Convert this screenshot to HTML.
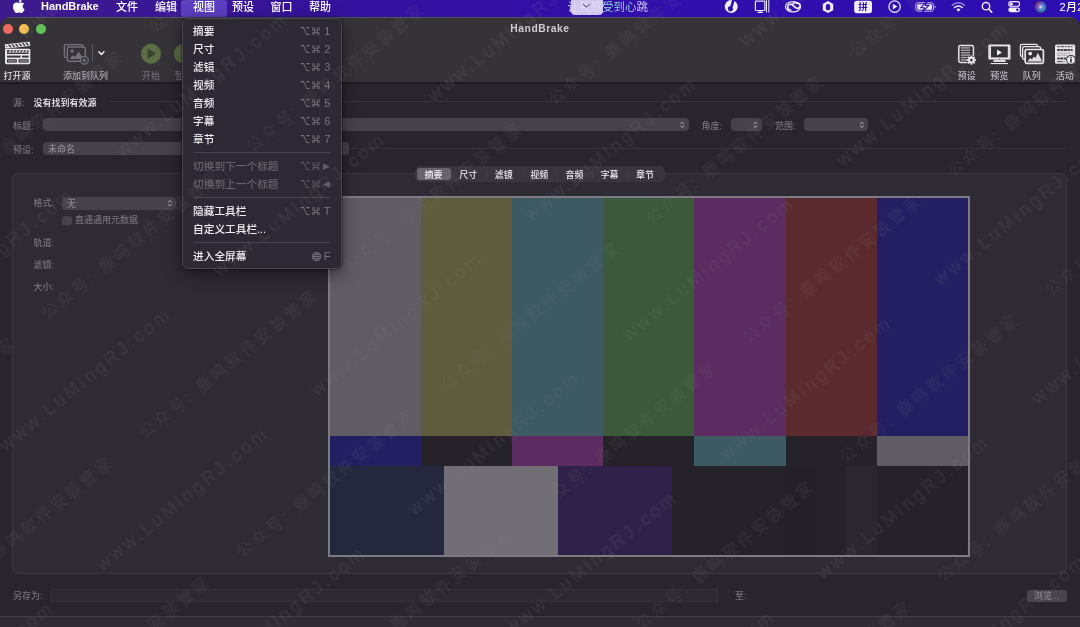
<!DOCTYPE html>
<html lang="zh-CN">
<head>
<meta charset="utf-8">
<title>HandBrake</title>
<style>
*{box-sizing:border-box;margin:0;padding:0}
html,body{width:1080px;height:627px;overflow:hidden;background:#28252e}
body{position:relative;font-weight:500;font-family:"Liberation Sans","Noto Sans CJK SC",sans-serif;color:#fff;font-size:9px;line-height:1}
.abs{position:absolute}
svg{position:absolute;overflow:visible}
#menubar{position:absolute;left:0;top:0;width:1080px;height:17px;will-change:transform}
#menubar .mi{position:absolute;top:-0.5px;height:14px;line-height:14px;font-size:11px;color:#fff;white-space:nowrap}
#menubar .mi.b{font-weight:bold;top:-1px;letter-spacing:-.05px}
#menubar .hl{position:absolute;left:181px;top:0;width:46px;height:17px;background:#5b3ec2;border-radius:3px}
#mbbg{position:absolute;left:0;top:0;width:1080px;height:30px;background:linear-gradient(90deg,#3e1b8c 0%,#3a1795 15%,#34119f 35%,#300fab 60%,#2c0eb1 100%)}
#win{position:absolute;left:0;top:17px;width:1080px;height:610px;background:#28252e;border-radius:10px 10px 0 0;overflow:hidden}
#wi{position:absolute;left:0;top:-17px;width:1080px;height:627px;will-change:transform}
#toolbar{position:absolute;left:0;top:17px;width:1080px;height:65px;background:#353338;border-top:1px solid #55535a}
.tl{position:absolute;top:24px;width:10px;height:10px;border-radius:50%}
.tbl{position:absolute;top:71px;height:11px;line-height:11px;font-size:9px;color:#bdbbc2;white-space:nowrap;transform:translateX(-50%)}
.tbl.w{color:#dddbe0}
.tbl.dim{color:#6f6d74}
#title{position:absolute;left:0;width:1080px;top:22px;height:13px;line-height:13px;text-align:center;font-size:10.3px;font-weight:bold;color:#cfcdd2;letter-spacing:.55px}
.lbl{position:absolute;height:12px;line-height:12px;font-size:9px;color:#75727b;white-space:nowrap}
.pop{position:absolute;height:13px;background:#46424c;border-radius:4px}
.pop .tx{position:absolute;left:5px;top:1px;height:13px;line-height:13px;font-size:9px;color:#8d8a93}
.line{position:absolute;height:1px;background:#36333b}
#tabbox{position:absolute;left:12px;top:173px;width:1055px;height:401px;background:#2f2b35;border:1px solid #3b3741;border-radius:6px}
#seg{position:absolute;left:416px;top:167px;width:248px;height:14px;background:#38353e;border-radius:4px;box-shadow:0 0 0 .5px #45424b}
#seg span{position:absolute;top:1.6px;height:12px;line-height:12px;font-size:9px;color:#eceaef;text-align:center;width:36px;transform:translateX(-50%)}
#seg .sel{position:absolute;left:1px;top:1px;width:34px;height:12px;background:#67646d;border-radius:3px}
#seg i{position:absolute;top:3px;width:1px;height:8px;background:#423f48}
#preview{position:absolute;left:328px;top:196px;width:642px;height:361px;background:#7c7a82}
#preview div{position:absolute}
#menu{position:absolute;left:182px;top:18px;width:160px;height:251px;background:#2d2934;border:1px solid #4b4851;border-radius:6px;box-shadow:0 5px 16px rgba(0,0,0,.5),0 0 0 .5px rgba(0,0,0,.6)}
#menu .it,#menu .sc{will-change:transform}
#menu .it{position:absolute;left:10px;font-size:10.7px;color:#f1eff3;white-space:nowrap;height:14px;line-height:14px}
#menu .it.dis{color:#66636b}
#menu .sc{position:absolute;left:0;top:0;font-size:10.7px;color:#77747c;white-space:nowrap;height:14px;line-height:14px}
#menu .sc b{position:absolute;font-weight:normal;top:0;height:14px;line-height:14px;font-family:"DejaVu Sans","Liberation Sans",sans-serif}
#menu .sc b.o{left:117.3px;top:-.6px;font-size:8.5px;transform:scaleY(1.6);transform-origin:50% 50%}
#menu .sc b.c{left:127.8px;top:1px;font-size:10.2px}
#menu .sc b.k{left:139.2px;top:.2px;width:10px;text-align:center;font-family:"Liberation Sans",sans-serif;font-size:11px}
#menu .sc b.a{left:140.1px;top:0px;font-size:9px}
#menu .sc.dis{color:#5d5a62}
#menu .sep{position:absolute;left:10px;right:10px;height:1px;background:#47444c}
#wm{position:absolute;left:0;top:0;width:0;height:0;transform-origin:0 0;transform:rotate(-39.2deg);pointer-events:none}
#wm span{position:absolute;white-space:nowrap;color:rgba(140,135,138,.095);height:20px;line-height:20px;margin-top:-10px}
#wm .w1{font-size:18px;letter-spacing:3.3px;-webkit-text-stroke:1px rgba(140,135,138,.07)}
#wm .w2{font-size:15.6px;letter-spacing:3.5px;font-weight:400;-webkit-text-stroke:.7px rgba(140,135,138,.07)}
#wmclip{position:absolute;left:0;top:0;width:1080px;height:627px;overflow:hidden;pointer-events:none;filter:blur(.45px)}
</style>
</head>
<body>
<div id="mbbg"></div>
<div id="win"><div id="wi">
  <div id="toolbar"></div>
  <div class="abs" style="left:0;top:82px;width:1080px;height:1px;background:#222025"></div>
  <div class="abs" style="left:0;top:83px;width:1080px;height:1px;background:#1b191e"></div>
  <div class="tl" style="left:3px;background:#ec6a5e"></div>
  <div class="tl" style="left:19px;background:#f4bf4f"></div>
  <div class="tl" style="left:36px;background:#61c554"></div>
  <div id="title">HandBrake</div>

  <!-- clapper -->
  <svg style="left:0;top:36px" width="40" height="34" viewBox="0 36 40 34">
    <rect x="5" y="48.8" width="25.3" height="15.4" rx="1.4" fill="#e9e7eb"/>
    <g fill="#38363b">
      <rect x="7" y="50.2" width="21.6" height="2.4"/>
      <rect x="7" y="53" width="21.6" height="1"/>
      <rect x="7" y="55.6" width="13.6" height="2"/>
      <rect x="22" y="55.6" width="6.6" height="2"/>
      <rect x="7" y="59.2" width="9.8" height="3.4"/>
      <rect x="18.6" y="59.2" width="10" height="3.4"/>
    </g>
    <g fill="#e9e7eb">
      <path d="M8.6 52.6l1.6-2.4h1.5l-1.6 2.4zM11.8 52.6l1.6-2.4h1.5l-1.6 2.4zM15 52.6l1.6-2.4h1.5l-1.6 2.4zM18.2 52.6l1.6-2.4h1.5l-1.6 2.4zM21.4 52.6l1.6-2.4h1.5l-1.6 2.4zM24.6 52.6l1.6-2.4h1.5l-1.6 2.4z"/>
      <rect x="8" y="60.6" width="7.8" height=".7"/><rect x="19.8" y="60.6" width="7.8" height=".7"/>
    </g>
    <g transform="rotate(-6.5 5.2 48.7)">
      <rect x="5.2" y="44.4" width="25.2" height="4.3" rx=".7" fill="#e9e7eb"/>
      <path d="M8.3 45.1l2 2.9h1.7l-2-2.900zM11.800 45.100l2 2.900h1.700l-2-2.900zM15.300 45.100l2 2.900h1.700l-2-2.900zM18.800 45.100l2 2.900h1.700l-2-2.900zM22.300 45.100l2 2.900h1.700l-2-2.900zM25.800 45.100l2 2.900h1.700l-2-2.900z" fill="#38363b"/>
      <circle cx="7" cy="46.600" r=".65" fill="#38363b"/>
    </g>
  </svg>
  <!-- add to queue -->
  <svg style="left:60px;top:36px" width="50" height="34" viewBox="60 36 50 34">
    <g fill="none" stroke="#727078" stroke-width="1.4">
      <path d="M66.2 57.6h-.4a1.4 1.4 0 0 1-1.4-1.4V46a1.4 1.4 0 0 1 1.4-1.4h16a1.4 1.4 0 0 1 1.4 1.4v.4"/>
      <rect x="67.3" y="47" width="18" height="14.2" rx="1.6"/>
    </g>
    <circle cx="72.2" cy="51" r="1.8" fill="#727078"/>
    <path d="M69.6 59l3.4-4 2 2 3.6-5.6 4.6 7.6z" fill="#727078"/>
    <circle cx="84.4" cy="60.3" r="3.9" fill="#353338" stroke="#727078" stroke-width="1.3"/>
    <path d="M82.3 60.3h4.2M84.4 58.2v4.2" stroke="#727078" stroke-width="1.3" fill="none"/>
    <rect x="92" y="44" width="1" height="18" fill="#57555c"/>
    <path d="M98.8 51.8l2.6 2.6 2.6-2.6" fill="none" stroke="#eceaee" stroke-width="1.5" stroke-linecap="round" stroke-linejoin="round"/>
  </svg>
  <!-- start / pause -->
  <svg style="left:138px;top:40px" width="46" height="28" viewBox="138 40 46 28">
    <circle cx="151" cy="53.7" r="10" fill="#5b6d43"/>
    <path d="M147.6 48.6v10.2l8.4-5.1z" fill="#38432f"/>
    <circle cx="184" cy="53.7" r="10" fill="#5b6d43"/>
  </svg>
  <div class="tbl w" style="left:17px">打开源</div>
  <div class="tbl" style="left:85.5px;color:#aaa8af">添加到队列</div>
  <div class="tbl dim" style="left:151px">开始</div>
  <div class="tbl dim" style="left:184px">暂停</div>

  <!-- presets -->
  <svg style="left:950px;top:36px" width="130" height="34" viewBox="950 36 130 34">
    <rect x="958.8" y="45.4" width="14.6" height="17" rx="1.6" fill="#2f2d32" stroke="#e9e7eb" stroke-width="1.5"/>
    <g fill="#a9a7ad">
      <rect x="960.8" y="47.2" width="9.4" height="1.4"/><rect x="960.8" y="49.6" width="9.4" height="1.4"/><rect x="960.8" y="52" width="9.4" height="1.4"/><rect x="960.8" y="54.4" width="9.4" height="1.4"/><rect x="960.8" y="56.8" width="7" height="1.4"/><rect x="960.8" y="59.2" width="6" height="1.4"/>
    </g>
    <g transform="translate(971.4 60.1)">
      <circle r="4.6" fill="#353338"/>
      <g fill="#e9e7eb">
        <circle r="3.3"/>
        <rect x="-.9" y="-4.6" width="1.8" height="9.2"/>
        <rect x="-.9" y="-4.6" width="1.8" height="9.2" transform="rotate(45)"/>
        <rect x="-.9" y="-4.6" width="1.8" height="9.2" transform="rotate(90)"/>
        <rect x="-.9" y="-4.6" width="1.8" height="9.2" transform="rotate(135)"/>
      </g>
      <circle r="1.3" fill="#353338"/>
    </g>
    <!-- preview -->
    <rect x="988.3" y="44.6" width="22.2" height="15" rx="1.2" fill="#e9e7eb"/>
    <rect x="991" y="46.4" width="16.8" height="11" fill="#333136"/>
    <path d="M997 49.4v6l5-3z" fill="#f2f0f4"/>
    <path d="M994 59.6h11l1 2.4h-13z" fill="#dcdade"/>
    <rect x="990.6" y="63" width="17.4" height="1.1" fill="#e9e7eb"/>
    <g fill="#8b898f"><circle cx="989.7" cy="47.5" r=".4"/><circle cx="989.7" cy="50" r=".4"/><circle cx="989.7" cy="52.5" r=".4"/><circle cx="989.7" cy="55" r=".4"/><circle cx="989.7" cy="57.5" r=".4"/><circle cx="1009.1" cy="47.5" r=".4"/><circle cx="1009.1" cy="50" r=".4"/><circle cx="1009.1" cy="52.5" r=".4"/><circle cx="1009.1" cy="55" r=".4"/><circle cx="1009.1" cy="57.5" r=".4"/><circle cx="999.4" cy="59" r=".45" fill="#333136"/></g>
    <!-- queue -->
    <rect x="1020.4" y="44.4" width="17" height="12" rx="1.6" fill="#353338" stroke="#e9e7eb" stroke-width="1.3"/>
    <rect x="1022.6" y="46.7" width="18" height="12.6" rx="1.6" fill="#353338" stroke="#e9e7eb" stroke-width="1.3"/>
    <rect x="1025.2" y="49.5" width="18.2" height="13.8" rx="1.6" fill="#333136" stroke="#e9e7eb" stroke-width="1.7"/>
    <circle cx="1030.2" cy="53.6" r="1.9" fill="#e9e7eb"/>
    <path d="M1027.4 61.600l2.800-3.600 1.600 1.500 2.100-3.100 1.500 1.700 2.500-5.300 4.300 8.800z" fill="#dedce1"/>
    <!-- activity -->
    <rect x="1055" y="44.4" width="20.2" height="19.4" rx="1.6" fill="#e4e2e6"/>
    <g stroke="#47454b" fill="none">
      <path d="M1057.2 46.700h15.400" stroke-width="1" stroke-dasharray="2.400 .8 4 .8 1.400 .8 2.600 .8"/>
      <path d="M1057.200 50h15.400" stroke-width="1.900" stroke-dasharray="3 .5 2.600 .5 3.200 .5"/>
      <path d="M1057.200 53.100h13.600" stroke-width=".9" stroke-dasharray="1.600 .7 3.200 .7 2.400 .7" opacity=".55"/>
      <path d="M1057.200 55.200h10.600" stroke-width=".9" stroke-dasharray="3 .7 1.400 .7 2.600 .7" opacity=".55"/>
      <path d="M1057.200 58.400h8.800" stroke-width="2" stroke-dasharray="2.600 .5 3 .5"/>
      <path d="M1057.200 61.600h8.400" stroke-width="1" stroke-dasharray="5.400 1 1 1"/>
    </g>
    <circle cx="1071" cy="59.8" r="4.9" fill="#353338"/>
    <circle cx="1071" cy="59.8" r="3.9" fill="#e9e7eb"/>
    <circle cx="1071" cy="57.6" r=".85" fill="#353338"/>
    <rect x="1070.2" y="59" width="1.6" height="3.6" fill="#353338"/>
  </svg>
  <div class="tbl" style="left:966.7px">预设</div>
  <div class="tbl" style="left:999.2px">预览</div>
  <div class="tbl" style="left:1031.8px">队列</div>
  <div class="tbl" style="left:1064.8px">活动</div>

  <div class="lbl" style="left:13px;top:97px">源:</div>
  <div class="lbl" style="left:33.5px;top:97px;color:#f4f2f6">没有找到有效源</div>
  <div class="line" style="left:110px;top:101px;width:956px"></div>
  <div class="lbl" style="left:13px;top:120px">标题:</div>
  <div class="pop" style="left:43px;top:118px;width:646px"></div>
  <div class="lbl" style="left:701.5px;top:120px">角度:</div>
  <div class="pop" style="left:731px;top:118px;width:31px"></div>
  <div class="lbl" style="left:775px;top:120px">范围:</div>
  <div class="pop" style="left:804px;top:118px;width:64px"></div>
  <div class="lbl" style="left:13px;top:143.6px">预设:</div>
  <div class="pop" style="left:43px;top:142px;width:306px"><span class="tx">未命名</span></div>
  <div class="line" style="left:349px;top:148px;width:717px"></div>

  <div id="tabbox"></div>
  <div id="seg">
    <div class="sel"></div>
    <i style="left:70px"></i><i style="left:106px"></i><i style="left:141px"></i><i style="left:176px"></i><i style="left:212px"></i>
    <span style="left:17.6px">摘要</span><span style="left:52.3px">尺寸</span><span style="left:87.7px">滤镜</span><span style="left:123.2px">视频</span><span style="left:158.5px">音频</span><span style="left:193.5px">字幕</span><span style="left:229px">章节</span>
  </div>
  <div class="lbl" style="left:33.5px;top:197px">格式:</div>
  <div class="pop" style="left:62px;top:197px;width:114px;height:13px"><span class="tx">无</span></div>
  <div class="abs" style="left:62px;top:215.5px;width:9.5px;height:9.5px;background:#45424b;border-radius:2.5px"></div>
  <div class="lbl" style="left:75px;top:214px">直通通用元数据</div>
  <div class="lbl" style="left:33.5px;top:236.5px">轨道:</div>
  <div class="lbl" style="left:33.5px;top:259px">滤镜:</div>
  <div class="lbl" style="left:33.5px;top:281px">大小:</div>
  <svg style="left:0;top:0" width="1080" height="627" viewBox="0 0 1080 627">
    <g fill="none" stroke="#8f8c95" stroke-width="1.1" stroke-linecap="round" stroke-linejoin="round">
      <path d="M680.8 123.6l1.5-1.5 1.5 1.5M680.8 125.8l1.5 1.5 1.5-1.5"/>
      <path d="M753.9 123.6l1.5-1.5 1.5 1.5M753.9 125.8l1.5 1.5 1.5-1.5"/>
      <path d="M860.4 123.6l1.5-1.5 1.5 1.5M860.4 125.8l1.5 1.5 1.5-1.5"/>
      <path d="M168.4 202.1l1.5-1.5 1.5 1.5M168.4 204.3l1.5 1.5 1.5-1.5"/>
    </g>
  </svg>
  <div id="preview">
    <div style="left:1.5px;top:2px;width:638.5px;height:357px;background:#252229"></div>
    <div style="left:1.5px;top:2px;width:91.5px;height:238px;background:#5f5c64"></div>
    <div style="left:93px;top:2px;width:91px;height:238px;background:#5f5b3d"></div>
    <div style="left:184px;top:2px;width:91px;height:238px;background:#3d5962"></div>
    <div style="left:275px;top:2px;width:91px;height:238px;background:#3c5a3b"></div>
    <div style="left:366px;top:2px;width:92px;height:238px;background:#5b2b61"></div>
    <div style="left:458px;top:2px;width:91px;height:238px;background:#5b2a2e"></div>
    <div style="left:549px;top:2px;width:91px;height:238px;background:#231f62"></div>
    <div style="left:1.5px;top:240px;width:91.5px;height:30px;background:#231f62"></div>
    <div style="left:184px;top:240px;width:91px;height:30px;background:#5b2b61"></div>
    <div style="left:366px;top:240px;width:92px;height:30px;background:#3d5962"></div>
    <div style="left:549px;top:240px;width:91px;height:30px;background:#5f5c64"></div>
    <div style="left:1.5px;top:270px;width:114px;height:89px;background:#25273f"></div>
    <div style="left:115.5px;top:270px;width:114px;height:89px;background:#716e76"></div>
    <div style="left:229.5px;top:270px;width:114px;height:89px;background:#2f2149"></div>
    <div style="left:458px;top:270px;width:30px;height:89px;background:#232127"></div>
    <div style="left:518px;top:270px;width:31px;height:89px;background:#2a272e"></div>
  </div>
  <div class="lbl" style="left:13px;top:589.5px">另存为:</div>
  <div class="abs" style="left:51px;top:589px;width:667px;height:12.5px;background:#2c2931;border:1px solid #35323a"></div>
  <div class="lbl" style="left:735px;top:589.5px">至:</div>
  <div class="abs" style="left:1027px;top:589.5px;width:39.5px;height:12px;background:#47444d;border-radius:3px;text-align:center;font-size:9px;line-height:12px;color:#86838c">浏览...</div>
  <div class="abs" style="left:0;top:616px;width:1080px;height:11px;background:#2f2c35;border-top:1px solid #403d46"></div>
</div></div>

<div id="menubar">
  <div class="hl"></div>
  <svg style="left:12.6px;top:-1.5px" width="11.6" height="14.2" viewBox="4 32 377 448"><path fill="#fff" d="M318.7 268.7c-.2-36.7 16.4-64.4 50-84.8-18.8-26.9-47.2-41.7-84.7-44.6-35.5-2.8-74.3 20.7-88.5 20.7-15 0-49.4-19.7-76.4-19.7C63.3 141.2 4 184.8 4 273.5q0 39.3 14.400 81.200c12.800 36.700 59 126.700 107.200 125.200 25.200-.6 43-17.900 75.800-17.900 31.800 0 48.300 17.900 76.400 17.900 48.600-.7 90.400-82.500 102.600-119.300-65.200-30.700-61.700-90-61.700-91.900zm-56.600-164.200c27.300-32.400 24.800-61.900 24-72.500-24.100 1.400-52 16.400-67.900 34.900-17.500 19.800-27.800 44.300-25.600 71.900 26.100 2 49.900-11.400 69.500-34.300z"/></svg>
  <div class="mi b" style="left:41px">HandBrake</div>
  <div class="mi" style="left:116px">文件</div>
  <div class="mi" style="left:155px">编辑</div>
  <div class="mi" style="left:193px">视图</div>
  <div class="mi" style="left:232px">预设</div>
  <div class="mi" style="left:270.5px">窗口</div>
  <div class="mi" style="left:309px">帮助</div>
  <div class="mi" style="left:567.5px;font-size:11.5px;font-weight:400;background:linear-gradient(90deg,#fff 0%,#e8e6ff 35%,#8fe9d2 52%,#8fe0d4 70%,#d9d0ff 88%,#efeaff 100%);-webkit-background-clip:text;background-clip:text;color:transparent">让我感受到心跳</div>
  <div class="abs" style="left:570.5px;top:-3px;width:32.5px;height:18px;border-radius:4px;background:rgba(226,219,246,.9)"></div>
  <svg style="left:580px;top:0" width="14" height="12" viewBox="580 0 14 12"><path d="M583.3 4.300l3.100 2.900 3.100-2.900" fill="none" stroke="#3a3350" stroke-width="1" stroke-linecap="round" stroke-linejoin="round"/></svg>
  <!-- status icons -->
  <svg style="left:715px;top:0" width="365" height="17" viewBox="715 0 365 17">
    <!-- music -->
    <circle cx="731.2" cy="6.5" r="6.5" fill="#f1eefb"/>
    <path d="M732.100 -.2l2.600 .5-2.100 7.300a2.500 2.500 0 1 1-2.300-1.300z" fill="#2f10a8"/>
    <!-- display -->
    <g fill="none" stroke="#e9e6f8" stroke-width="1.2">
      <rect x="755.400" y="1.100" width="9.500" height="9.400" rx=".8"/>
      <path d="M760.200 10.600v1.400M757.600 12.300h5.400"/>
      <path d="M766.500 -1v13.500M768.800 -1v13.500" stroke-width="1"/>
    </g>
    <!-- creative cloud -->
    <g fill="none" stroke="#f1eefb">
      <ellipse cx="793" cy="6.750" rx="7.500" ry="5.150" stroke-width="1.200"/>
      <path d="M791.300 9.900a2.900 2.900 0 1 1 .6-5.400l4 3.300a2.600 2.600 0 1 0 .4-4.400" stroke-width="1.700"/>
      <path d="M792.600 4.300a3.400 3.400 0 0 1 4.800-.9" stroke-width="1.500"/>
    </g>
    <!-- hexagon -->
    <path d="M828 1l5.200 2.900v6.300l-5.200 2.900-5.200-2.900v-6.300z" fill="#f1eefb"/>
    <rect x="825.800" y="4" width="4.400" height="6.200" rx="1.800" fill="#3010a8"/>
    <!-- input method -->
    <rect x="854.200" y=".8" width="17.800" height="12.400" rx="2.600" fill="#f1eefb"/>
    <!-- play -->
    <circle cx="894.600" cy="6.600" r="5.700" fill="none" stroke="#f1eefb" stroke-width="1.2"/>
    <path d="M892.800 3.800v5.600l4.600-2.800z" fill="#f1eefb"/>
    <!-- battery -->
    <rect x="915.800" y="2.800" width="17.600" height="8.400" rx="2.200" fill="none" stroke="#c9c2ee" stroke-width="1"/>
    <rect x="917.300" y="4.300" width="14.600" height="5.400" rx="1" fill="#f1eefb"/>
    <path d="M934.600 5.500v3a1.600 1.600 0 0 0 0-3z" fill="#c9c2ee"/>
    <path d="M927.2 1.2l-6.4 6.5h3.6l-2.2 4.7 6.6-6.9h-3.6z" fill="#f1eefb" stroke="#2e0fae" stroke-width="1.1"/>
    <!-- wifi -->
    <g fill="none" stroke="#f1eefb" stroke-linecap="round">
      <path d="M952.400 5.200a8.600 8.600 0 0 1 12 0" stroke-width="1.5" opacity=".55"/>
      <path d="M954.600 7.500a5.400 5.400 0 0 1 7.600 0" stroke-width="1.600"/>
    </g>
    <path d="M958.400 11.700l-2-2.200a2.800 2.800 0 0 1 4 0z" fill="#f1eefb"/>
    <!-- search -->
    <circle cx="986" cy="6.200" r="3.700" fill="none" stroke="#f1eefb" stroke-width="1.400"/>
    <path d="M988.800 9l3 3.200" stroke="#f1eefb" stroke-width="1.600" stroke-linecap="round"/>
    <!-- control center -->
    <rect x="1008.800" y="1.600" width="10.800" height="4.600" rx="2.300" fill="none" stroke="#f1eefb" stroke-width="1.100"/>
    <circle cx="1011.400" cy="3.900" r="1.500" fill="#f1eefb"/>
    <rect x="1008.300" y="7.400" width="11.800" height="4.800" rx="2.400" fill="#f1eefb"/>
    <circle cx="1017.400" cy="9.800" r="1.300" fill="#2e0fae"/>
    <!-- siri -->
    <defs>
      <radialGradient id="sg" cx=".52" cy=".5" r=".5"><stop offset="0" stop-color="#fff" stop-opacity=".85"/><stop offset=".3" stop-color="#b9b4ee" stop-opacity=".55"/><stop offset=".65" stop-color="#4a45a0" stop-opacity=".15"/><stop offset="1" stop-color="#1a1840" stop-opacity=".55"/></radialGradient>
      <linearGradient id="sg2" x1="0" y1=".15" x2="1" y2=".85"><stop offset="0" stop-color="#e2405c"/><stop offset=".38" stop-color="#7a5fe0"/><stop offset=".62" stop-color="#3f8ee8"/><stop offset="1" stop-color="#2fd0a0"/></linearGradient>
    </defs>
    <circle cx="1040.5" cy="6.9" r="5.8" fill="#23204a"/>
    <circle cx="1040.5" cy="6.9" r="5.8" fill="url(#sg2)" opacity=".9"/>
    <circle cx="1040.5" cy="6.9" r="5.8" fill="url(#sg)"/>
  </svg>
  <div class="abs" style="left:854.2px;top:.8px;width:17.8px;height:12.4px;line-height:12.4px;text-align:center;font-size:9.5px;font-weight:bold;color:#3010a8">拼</div>
  <div class="mi" style="left:1059.5px;font-size:11px;letter-spacing:.3px">2月2</div>
</div>

<div id="menu">
  <div class="it" style="top:5px">摘要</div><div class="sc" style="top:5px"><b class="o">⌥</b><b class="c">⌘</b><b class="k">1</b></div>
  <div class="it" style="top:23px">尺寸</div><div class="sc" style="top:23px"><b class="o">⌥</b><b class="c">⌘</b><b class="k">2</b></div>
  <div class="it" style="top:41px">滤镜</div><div class="sc" style="top:41px"><b class="o">⌥</b><b class="c">⌘</b><b class="k">3</b></div>
  <div class="it" style="top:59px">视频</div><div class="sc" style="top:59px"><b class="o">⌥</b><b class="c">⌘</b><b class="k">4</b></div>
  <div class="it" style="top:77px">音频</div><div class="sc" style="top:77px"><b class="o">⌥</b><b class="c">⌘</b><b class="k">5</b></div>
  <div class="it" style="top:95px">字幕</div><div class="sc" style="top:95px"><b class="o">⌥</b><b class="c">⌘</b><b class="k">6</b></div>
  <div class="it" style="top:113px">章节</div><div class="sc" style="top:113px"><b class="o">⌥</b><b class="c">⌘</b><b class="k">7</b></div>
  <div class="sep" style="top:133px"></div>
  <div class="it dis" style="top:140px">切换到下一个标题</div><div class="sc dis" style="top:140px"><b class="o">⌥</b><b class="c">⌘</b><b class="a">▶</b></div>
  <div class="it dis" style="top:158px">切换到上一个标题</div><div class="sc dis" style="top:158px"><b class="o">⌥</b><b class="c">⌘</b><b class="a">◀</b></div>
  <div class="sep" style="top:178px"></div>
  <div class="it" style="top:185px">隐藏工具栏</div><div class="sc" style="top:185px"><b class="o">⌥</b><b class="c">⌘</b><b class="k">T</b></div>
  <div class="it" style="top:203px">自定义工具栏...</div>
  <div class="sep" style="top:223px"></div>
  <div class="it" style="top:230px">进入全屏幕</div><div class="sc" style="top:230px"><b class="k">F</b></div>
  <svg style="left:127.9px;top:231.7px" width="11" height="11" viewBox="0 0 11 11"><g fill="none" stroke="#77747c" stroke-width=".9"><circle cx="5.500" cy="5.500" r="4.100"/><ellipse cx="5.500" cy="5.500" rx="1.800" ry="4.100"/><path d="M1.400 5.500h8.200M2.100 3.400h6.800M2.100 7.600h6.800"/></g></svg>
</div>

<div id="wmclip"><div id="wm">
<span class="w1" style="left:-1111.0px;top:-114.2px">www.LuMingRJ.com</span>
<span class="w1" style="left:-834.5px;top:-114.2px">www.LuMingRJ.com</span>
<span class="w1" style="left:-558.0px;top:-114.2px">www.LuMingRJ.com</span>
<span class="w1" style="left:-281.5px;top:-114.2px">www.LuMingRJ.com</span>
<span class="w1" style="left:-5.0px;top:-114.2px">www.LuMingRJ.com</span>
<span class="w1" style="left:271.5px;top:-114.2px">www.LuMingRJ.com</span>
<span class="w1" style="left:548.0px;top:-114.2px">www.LuMingRJ.com</span>
<span class="w1" style="left:824.5px;top:-114.2px">www.LuMingRJ.com</span>
<span class="w1" style="left:1101.0px;top:-114.2px">www.LuMingRJ.com</span>
<span class="w1" style="left:-1111.0px;top:39.8px">www.LuMingRJ.com</span>
<span class="w1" style="left:-834.5px;top:39.8px">www.LuMingRJ.com</span>
<span class="w1" style="left:-558.0px;top:39.8px">www.LuMingRJ.com</span>
<span class="w1" style="left:-281.5px;top:39.8px">www.LuMingRJ.com</span>
<span class="w1" style="left:-5.0px;top:39.8px">www.LuMingRJ.com</span>
<span class="w1" style="left:271.5px;top:39.8px">www.LuMingRJ.com</span>
<span class="w1" style="left:548.0px;top:39.8px">www.LuMingRJ.com</span>
<span class="w1" style="left:824.5px;top:39.8px">www.LuMingRJ.com</span>
<span class="w1" style="left:1101.0px;top:39.8px">www.LuMingRJ.com</span>
<span class="w1" style="left:-1111.0px;top:193.8px">www.LuMingRJ.com</span>
<span class="w1" style="left:-834.5px;top:193.8px">www.LuMingRJ.com</span>
<span class="w1" style="left:-558.0px;top:193.8px">www.LuMingRJ.com</span>
<span class="w1" style="left:-281.5px;top:193.8px">www.LuMingRJ.com</span>
<span class="w1" style="left:-5.0px;top:193.8px">www.LuMingRJ.com</span>
<span class="w1" style="left:271.5px;top:193.8px">www.LuMingRJ.com</span>
<span class="w1" style="left:548.0px;top:193.8px">www.LuMingRJ.com</span>
<span class="w1" style="left:824.5px;top:193.8px">www.LuMingRJ.com</span>
<span class="w1" style="left:1101.0px;top:193.8px">www.LuMingRJ.com</span>
<span class="w1" style="left:-1111.0px;top:347.8px">www.LuMingRJ.com</span>
<span class="w1" style="left:-834.5px;top:347.8px">www.LuMingRJ.com</span>
<span class="w1" style="left:-558.0px;top:347.8px">www.LuMingRJ.com</span>
<span class="w1" style="left:-281.5px;top:347.8px">www.LuMingRJ.com</span>
<span class="w1" style="left:-5.0px;top:347.8px">www.LuMingRJ.com</span>
<span class="w1" style="left:271.5px;top:347.8px">www.LuMingRJ.com</span>
<span class="w1" style="left:548.0px;top:347.8px">www.LuMingRJ.com</span>
<span class="w1" style="left:824.5px;top:347.8px">www.LuMingRJ.com</span>
<span class="w1" style="left:1101.0px;top:347.8px">www.LuMingRJ.com</span>
<span class="w1" style="left:-1111.0px;top:501.8px">www.LuMingRJ.com</span>
<span class="w1" style="left:-834.5px;top:501.8px">www.LuMingRJ.com</span>
<span class="w1" style="left:-558.0px;top:501.8px">www.LuMingRJ.com</span>
<span class="w1" style="left:-281.5px;top:501.8px">www.LuMingRJ.com</span>
<span class="w1" style="left:-5.0px;top:501.8px">www.LuMingRJ.com</span>
<span class="w1" style="left:271.5px;top:501.8px">www.LuMingRJ.com</span>
<span class="w1" style="left:548.0px;top:501.8px">www.LuMingRJ.com</span>
<span class="w1" style="left:824.5px;top:501.8px">www.LuMingRJ.com</span>
<span class="w1" style="left:1101.0px;top:501.8px">www.LuMingRJ.com</span>
<span class="w1" style="left:-1111.0px;top:655.8px">www.LuMingRJ.com</span>
<span class="w1" style="left:-834.5px;top:655.8px">www.LuMingRJ.com</span>
<span class="w1" style="left:-558.0px;top:655.8px">www.LuMingRJ.com</span>
<span class="w1" style="left:-281.5px;top:655.8px">www.LuMingRJ.com</span>
<span class="w1" style="left:-5.0px;top:655.8px">www.LuMingRJ.com</span>
<span class="w1" style="left:271.5px;top:655.8px">www.LuMingRJ.com</span>
<span class="w1" style="left:548.0px;top:655.8px">www.LuMingRJ.com</span>
<span class="w1" style="left:824.5px;top:655.8px">www.LuMingRJ.com</span>
<span class="w1" style="left:1101.0px;top:655.8px">www.LuMingRJ.com</span>
<span class="w1" style="left:-1111.0px;top:809.8px">www.LuMingRJ.com</span>
<span class="w1" style="left:-834.5px;top:809.8px">www.LuMingRJ.com</span>
<span class="w1" style="left:-558.0px;top:809.8px">www.LuMingRJ.com</span>
<span class="w1" style="left:-281.5px;top:809.8px">www.LuMingRJ.com</span>
<span class="w1" style="left:-5.0px;top:809.8px">www.LuMingRJ.com</span>
<span class="w1" style="left:271.5px;top:809.8px">www.LuMingRJ.com</span>
<span class="w1" style="left:548.0px;top:809.8px">www.LuMingRJ.com</span>
<span class="w1" style="left:824.5px;top:809.8px">www.LuMingRJ.com</span>
<span class="w1" style="left:1101.0px;top:809.8px">www.LuMingRJ.com</span>
<span class="w1" style="left:-1111.0px;top:963.8px">www.LuMingRJ.com</span>
<span class="w1" style="left:-834.5px;top:963.8px">www.LuMingRJ.com</span>
<span class="w1" style="left:-558.0px;top:963.8px">www.LuMingRJ.com</span>
<span class="w1" style="left:-281.5px;top:963.8px">www.LuMingRJ.com</span>
<span class="w1" style="left:-5.0px;top:963.8px">www.LuMingRJ.com</span>
<span class="w1" style="left:271.5px;top:963.8px">www.LuMingRJ.com</span>
<span class="w1" style="left:548.0px;top:963.8px">www.LuMingRJ.com</span>
<span class="w1" style="left:824.5px;top:963.8px">www.LuMingRJ.com</span>
<span class="w1" style="left:1101.0px;top:963.8px">www.LuMingRJ.com</span>
<span class="w1" style="left:-1111.0px;top:1117.8px">www.LuMingRJ.com</span>
<span class="w1" style="left:-834.5px;top:1117.8px">www.LuMingRJ.com</span>
<span class="w1" style="left:-558.0px;top:1117.8px">www.LuMingRJ.com</span>
<span class="w1" style="left:-281.5px;top:1117.8px">www.LuMingRJ.com</span>
<span class="w1" style="left:-5.0px;top:1117.8px">www.LuMingRJ.com</span>
<span class="w1" style="left:271.5px;top:1117.8px">www.LuMingRJ.com</span>
<span class="w1" style="left:548.0px;top:1117.8px">www.LuMingRJ.com</span>
<span class="w1" style="left:824.5px;top:1117.8px">www.LuMingRJ.com</span>
<span class="w1" style="left:1101.0px;top:1117.8px">www.LuMingRJ.com</span>
<span class="w1" style="left:-1111.0px;top:1271.8px">www.LuMingRJ.com</span>
<span class="w1" style="left:-834.5px;top:1271.8px">www.LuMingRJ.com</span>
<span class="w1" style="left:-558.0px;top:1271.8px">www.LuMingRJ.com</span>
<span class="w1" style="left:-281.5px;top:1271.8px">www.LuMingRJ.com</span>
<span class="w1" style="left:-5.0px;top:1271.8px">www.LuMingRJ.com</span>
<span class="w1" style="left:271.5px;top:1271.8px">www.LuMingRJ.com</span>
<span class="w1" style="left:548.0px;top:1271.8px">www.LuMingRJ.com</span>
<span class="w1" style="left:824.5px;top:1271.8px">www.LuMingRJ.com</span>
<span class="w1" style="left:1101.0px;top:1271.8px">www.LuMingRJ.com</span>
<span class="w2" style="left:-957.3px;top:-35.2px">公众号: 鹿鸣软件安装管家</span>
<span class="w2" style="left:-693.3px;top:-35.2px">公众号: 鹿鸣软件安装管家</span>
<span class="w2" style="left:-429.3px;top:-35.2px">公众号: 鹿鸣软件安装管家</span>
<span class="w2" style="left:-165.3px;top:-35.2px">公众号: 鹿鸣软件安装管家</span>
<span class="w2" style="left:98.69999999999999px;top:-35.2px">公众号: 鹿鸣软件安装管家</span>
<span class="w2" style="left:362.7px;top:-35.2px">公众号: 鹿鸣软件安装管家</span>
<span class="w2" style="left:626.7px;top:-35.2px">公众号: 鹿鸣软件安装管家</span>
<span class="w2" style="left:890.7px;top:-35.2px">公众号: 鹿鸣软件安装管家</span>
<span class="w2" style="left:1154.7px;top:-35.2px">公众号: 鹿鸣软件安装管家</span>
<span class="w2" style="left:-957.3px;top:118.8px">公众号: 鹿鸣软件安装管家</span>
<span class="w2" style="left:-693.3px;top:118.8px">公众号: 鹿鸣软件安装管家</span>
<span class="w2" style="left:-429.3px;top:118.8px">公众号: 鹿鸣软件安装管家</span>
<span class="w2" style="left:-165.3px;top:118.8px">公众号: 鹿鸣软件安装管家</span>
<span class="w2" style="left:98.69999999999999px;top:118.8px">公众号: 鹿鸣软件安装管家</span>
<span class="w2" style="left:362.7px;top:118.8px">公众号: 鹿鸣软件安装管家</span>
<span class="w2" style="left:626.7px;top:118.8px">公众号: 鹿鸣软件安装管家</span>
<span class="w2" style="left:890.7px;top:118.8px">公众号: 鹿鸣软件安装管家</span>
<span class="w2" style="left:1154.7px;top:118.8px">公众号: 鹿鸣软件安装管家</span>
<span class="w2" style="left:-957.3px;top:272.8px">公众号: 鹿鸣软件安装管家</span>
<span class="w2" style="left:-693.3px;top:272.8px">公众号: 鹿鸣软件安装管家</span>
<span class="w2" style="left:-429.3px;top:272.8px">公众号: 鹿鸣软件安装管家</span>
<span class="w2" style="left:-165.3px;top:272.8px">公众号: 鹿鸣软件安装管家</span>
<span class="w2" style="left:98.69999999999999px;top:272.8px">公众号: 鹿鸣软件安装管家</span>
<span class="w2" style="left:362.7px;top:272.8px">公众号: 鹿鸣软件安装管家</span>
<span class="w2" style="left:626.7px;top:272.8px">公众号: 鹿鸣软件安装管家</span>
<span class="w2" style="left:890.7px;top:272.8px">公众号: 鹿鸣软件安装管家</span>
<span class="w2" style="left:1154.7px;top:272.8px">公众号: 鹿鸣软件安装管家</span>
<span class="w2" style="left:-957.3px;top:426.8px">公众号: 鹿鸣软件安装管家</span>
<span class="w2" style="left:-693.3px;top:426.8px">公众号: 鹿鸣软件安装管家</span>
<span class="w2" style="left:-429.3px;top:426.8px">公众号: 鹿鸣软件安装管家</span>
<span class="w2" style="left:-165.3px;top:426.8px">公众号: 鹿鸣软件安装管家</span>
<span class="w2" style="left:98.69999999999999px;top:426.8px">公众号: 鹿鸣软件安装管家</span>
<span class="w2" style="left:362.7px;top:426.8px">公众号: 鹿鸣软件安装管家</span>
<span class="w2" style="left:626.7px;top:426.8px">公众号: 鹿鸣软件安装管家</span>
<span class="w2" style="left:890.7px;top:426.8px">公众号: 鹿鸣软件安装管家</span>
<span class="w2" style="left:1154.7px;top:426.8px">公众号: 鹿鸣软件安装管家</span>
<span class="w2" style="left:-957.3px;top:580.8px">公众号: 鹿鸣软件安装管家</span>
<span class="w2" style="left:-693.3px;top:580.8px">公众号: 鹿鸣软件安装管家</span>
<span class="w2" style="left:-429.3px;top:580.8px">公众号: 鹿鸣软件安装管家</span>
<span class="w2" style="left:-165.3px;top:580.8px">公众号: 鹿鸣软件安装管家</span>
<span class="w2" style="left:98.69999999999999px;top:580.8px">公众号: 鹿鸣软件安装管家</span>
<span class="w2" style="left:362.7px;top:580.8px">公众号: 鹿鸣软件安装管家</span>
<span class="w2" style="left:626.7px;top:580.8px">公众号: 鹿鸣软件安装管家</span>
<span class="w2" style="left:890.7px;top:580.8px">公众号: 鹿鸣软件安装管家</span>
<span class="w2" style="left:1154.7px;top:580.8px">公众号: 鹿鸣软件安装管家</span>
<span class="w2" style="left:-957.3px;top:734.8px">公众号: 鹿鸣软件安装管家</span>
<span class="w2" style="left:-693.3px;top:734.8px">公众号: 鹿鸣软件安装管家</span>
<span class="w2" style="left:-429.3px;top:734.8px">公众号: 鹿鸣软件安装管家</span>
<span class="w2" style="left:-165.3px;top:734.8px">公众号: 鹿鸣软件安装管家</span>
<span class="w2" style="left:98.69999999999999px;top:734.8px">公众号: 鹿鸣软件安装管家</span>
<span class="w2" style="left:362.7px;top:734.8px">公众号: 鹿鸣软件安装管家</span>
<span class="w2" style="left:626.7px;top:734.8px">公众号: 鹿鸣软件安装管家</span>
<span class="w2" style="left:890.7px;top:734.8px">公众号: 鹿鸣软件安装管家</span>
<span class="w2" style="left:1154.7px;top:734.8px">公众号: 鹿鸣软件安装管家</span>
<span class="w2" style="left:-957.3px;top:888.8px">公众号: 鹿鸣软件安装管家</span>
<span class="w2" style="left:-693.3px;top:888.8px">公众号: 鹿鸣软件安装管家</span>
<span class="w2" style="left:-429.3px;top:888.8px">公众号: 鹿鸣软件安装管家</span>
<span class="w2" style="left:-165.3px;top:888.8px">公众号: 鹿鸣软件安装管家</span>
<span class="w2" style="left:98.69999999999999px;top:888.8px">公众号: 鹿鸣软件安装管家</span>
<span class="w2" style="left:362.7px;top:888.8px">公众号: 鹿鸣软件安装管家</span>
<span class="w2" style="left:626.7px;top:888.8px">公众号: 鹿鸣软件安装管家</span>
<span class="w2" style="left:890.7px;top:888.8px">公众号: 鹿鸣软件安装管家</span>
<span class="w2" style="left:1154.7px;top:888.8px">公众号: 鹿鸣软件安装管家</span>
<span class="w2" style="left:-957.3px;top:1042.8px">公众号: 鹿鸣软件安装管家</span>
<span class="w2" style="left:-693.3px;top:1042.8px">公众号: 鹿鸣软件安装管家</span>
<span class="w2" style="left:-429.3px;top:1042.8px">公众号: 鹿鸣软件安装管家</span>
<span class="w2" style="left:-165.3px;top:1042.8px">公众号: 鹿鸣软件安装管家</span>
<span class="w2" style="left:98.69999999999999px;top:1042.8px">公众号: 鹿鸣软件安装管家</span>
<span class="w2" style="left:362.7px;top:1042.8px">公众号: 鹿鸣软件安装管家</span>
<span class="w2" style="left:626.7px;top:1042.8px">公众号: 鹿鸣软件安装管家</span>
<span class="w2" style="left:890.7px;top:1042.8px">公众号: 鹿鸣软件安装管家</span>
<span class="w2" style="left:1154.7px;top:1042.8px">公众号: 鹿鸣软件安装管家</span>
<span class="w2" style="left:-957.3px;top:1196.8px">公众号: 鹿鸣软件安装管家</span>
<span class="w2" style="left:-693.3px;top:1196.8px">公众号: 鹿鸣软件安装管家</span>
<span class="w2" style="left:-429.3px;top:1196.8px">公众号: 鹿鸣软件安装管家</span>
<span class="w2" style="left:-165.3px;top:1196.8px">公众号: 鹿鸣软件安装管家</span>
<span class="w2" style="left:98.69999999999999px;top:1196.8px">公众号: 鹿鸣软件安装管家</span>
<span class="w2" style="left:362.7px;top:1196.8px">公众号: 鹿鸣软件安装管家</span>
<span class="w2" style="left:626.7px;top:1196.8px">公众号: 鹿鸣软件安装管家</span>
<span class="w2" style="left:890.7px;top:1196.8px">公众号: 鹿鸣软件安装管家</span>
<span class="w2" style="left:1154.7px;top:1196.8px">公众号: 鹿鸣软件安装管家</span>
</div></div>
</body>
</html>
